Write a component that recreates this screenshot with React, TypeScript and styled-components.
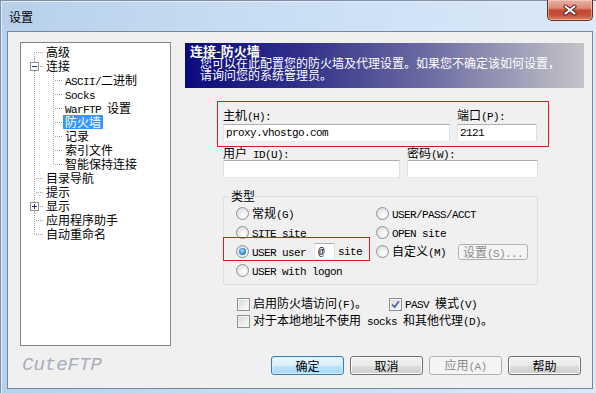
import React from "react";
import styled, { createGlobalStyle, css } from "styled-components";

const CJK = `"Noto Sans CJK SC", "Noto Sans", sans-serif`;
const MONO = `"Liberation Mono", "DejaVu Sans Mono", monospace`;

const GlobalStyle = createGlobalStyle`
  html, body { margin: 0; padding: 0; background: #ffffff; }
  body { font-family: ${CJK}; font-size: 12px; color: #000; }
  *, *::before, *::after { box-sizing: border-box; }
`;

/* latin run in the bitmap-like monospace of the dialog */
const M = styled.span`
  font-family: ${MONO};
  font-size: 11px;
  letter-spacing: -0.6px;
`;

const Window = styled.div`
  width: 596px;
  height: 393px;
  padding: 0 3px 4px 7px;
  display: flex;
  flex-direction: column;
  background: linear-gradient(to right, #b7d0eb 0%, #c9def3 45%, #dbe9f8 100%);
  box-shadow: inset 1px 1px 0 #7f90a5, inset 2px 2px 0 #e4eefa;
  overflow: hidden;
`;

const TitleBar = styled.div`
  height: 31px;
  flex: none;
  display: flex;
  align-items: flex-start;
`;

const TitleText = styled.div`
  margin: 10px 0 0 2px;
  font-size: 12px;
  line-height: 14px;
  color: #000;
`;

const CloseButton = styled.div`
  margin-left: auto;
  width: 46px;
  height: 21px;
  border: 1px solid #6b2b22;
  border-top: none;
  border-radius: 0 0 5px 5px;
  background: linear-gradient(
    to bottom,
    #eab1a2 0%,
    #dc8a78 40%,
    #c4492f 52%,
    #c24f36 75%,
    #dd8462 100%
  );
  box-shadow: inset 0 0 0 1px rgba(255, 220, 210, 0.5);
  display: flex;
  align-items: center;
  justify-content: center;
`;

const Client = styled.div`
  flex: 1;
  border: 1px solid #76879b;
  background: #f0f0f0;
  display: grid;
  grid-template-columns: 151px 1fr;
  grid-template-rows: 304px auto;
  column-gap: 14px;
  row-gap: 10px;
  align-content: start;
  padding: 10px 8px 0 12px;
`;

/* ---------- tree ---------- */
const TreePanel = styled.div`
  border: 1px solid #828790;
  background: #fff;
  padding: 2px 0 0 4px;
`;

const TreeRow = styled.div`
  display: flex;
  height: 14px;
`;

type VLine = "full" | "top" | "bottom";

const Guide = styled.span<{ $v: VLine; $h?: boolean }>`
  position: relative;
  width: 19px;
  flex: none;
  &::before {
    content: "";
    position: absolute;
    left: 9px;
    width: 1px;
    top: ${(p) => (p.$v === "bottom" ? "7px" : "0")};
    bottom: ${(p) => (p.$v === "top" ? "7px" : "0")};
    background: repeating-linear-gradient(
      to bottom,
      #a0a0a0 0 1px,
      transparent 1px 2px
    );
  }
  ${(p) =>
    p.$h &&
    css`
      &::after {
        content: "";
        position: absolute;
        left: 10px;
        top: 7px;
        width: 9px;
        height: 1px;
        background: repeating-linear-gradient(
          to right,
          transparent 0 1px,
          #a0a0a0 1px 2px
        );
      }
    `}
`;

const Expander = styled.span`
  position: absolute;
  z-index: 1;
  left: 5px;
  top: 3px;
  width: 9px;
  height: 9px;
  border: 1px solid #919191;
  background: #fff;
  display: flex;
  align-items: center;
  justify-content: center;
`;

const NodeLabel = styled.span<{ $sel?: boolean }>`
  display: inline-block;
  padding: 0 2px;
  height: 14px;
  line-height: 14px;
  white-space: nowrap;
  ${(p) =>
    p.$sel &&
    css`
      background: #3399ff;
      color: #fff;
    `}
`;

type TreeNode = {
  label: React.ReactNode;
  level: 0 | 1;
  exp?: "+" | "-";
  sel?: boolean;
};

const NODES: TreeNode[] = [
  { label: "高级", level: 0 },
  { label: "连接", level: 0, exp: "-" },
  { label: <><M>ASCII/</M>二进制</>, level: 1 },
  { label: <M>Socks</M>, level: 1 },
  { label: <><M>WarFTP </M>设置</>, level: 1 },
  { label: "防火墙", level: 1, sel: true },
  { label: "记录", level: 1 },
  { label: "索引文件", level: 1 },
  { label: "智能保持连接", level: 1 },
  { label: "目录导航", level: 0 },
  { label: "提示", level: 0 },
  { label: "显示", level: 0, exp: "+" },
  { label: "应用程序助手", level: 0 },
  { label: "自动重命名", level: 0 },
];

const ExpanderSign: React.FC<{ plus?: boolean }> = ({ plus }) => (
  <svg width="7" height="7" viewBox="0 0 7 7">
    <rect x="1" y="3" width="5" height="1" fill="#1e2f6a" />
    {plus && <rect x="3" y="1" width="1" height="5" fill="#1e2f6a" />}
  </svg>
);

const Tree: React.FC = () => (
  <TreePanel>
    {NODES.map((n, i) => {
      const last = i === NODES.length - 1;
      const v0: VLine = i === 0 ? "bottom" : last ? "top" : "full";
      const next = NODES[i + 1];
      const lastChild = n.level === 1 && (!next || next.level === 0);
      return (
        <TreeRow key={i}>
          <Guide $v={v0} $h={n.level === 0}>
            {n.exp && (
              <Expander>
                <ExpanderSign plus={n.exp === "+"} />
              </Expander>
            )}
          </Guide>
          {n.level === 1 && <Guide $v={lastChild ? "top" : "full"} $h />}
          <NodeLabel $sel={n.sel}>{n.label}</NodeLabel>
        </TreeRow>
      );
    })}
  </TreePanel>
);

/* ---------- right side ---------- */
const RightPanel = styled.div`
  display: flex;
  flex-direction: column;
  padding-top: 1px;
  min-width: 0;
`;

const Banner = styled.div`
  height: 45px;
  padding: 1px 0 0 5px;
  color: #fff;
  background: linear-gradient(
    to right,
    #0b0b7d 0%,
    #32328a 30%,
    #6a6aa2 60%,
    #c4c4c8 100%
  );
`;

const BannerTitle = styled.div`
  font-weight: 700;
  font-size: 13px;
  line-height: 13px;
`;

const BannerText = styled.div`
  padding-left: 10px;
  font-size: 12px;
  line-height: 12px;
  white-space: nowrap;
`;

const HighlightBox = styled.div`
  margin: 13px 0 0 32px;
  width: 332px;
  height: 46px;
  border: 1px solid #e8161e;
  padding: 6px 0 0 5px;
  display: flex;
  gap: 7px;
`;

const UserRow = styled.div`
  margin: -1px 0 0 38px;
  display: flex;
  gap: 7px;
`;

const Field = styled.div<{ $w: number; $gap: number }>`
  width: ${(p) => p.$w}px;
  display: flex;
  flex-direction: column;
  gap: ${(p) => p.$gap}px;
`;

const FieldLabel = styled.div`
  height: 14px;
  line-height: 14px;
  white-space: nowrap;
`;

const TextInput = styled.input<{ $w?: number; $ml?: number }>`
  width: ${(p) => (p.$w ? `${p.$w}px` : "100%")};
  height: 18px;
  margin: 0 0 0 ${(p) => p.$ml ?? 0}px;
  padding: 0 0 0 2px;
  border: 1px solid;
  border-color: #abadb3 #dbdfe6 #e3e9ef #e2e3ea;
  border-radius: 1px;
  background: #fff;
  color: #000;
  font-family: ${MONO};
  font-size: 11px;
  letter-spacing: -0.6px;
  outline: none;
`;

const SmallInput = styled(TextInput)`
  height: 17px;
  padding-left: 3px;
`;

const Group = styled.fieldset`
  margin: 11px 0 0 38px;
  width: 315px;
  border: 1px solid #d5dfe5;
  border-radius: 3px;
  padding: 1px 0 4px 12px;
  min-inline-size: 0;
`;

const GroupLegend = styled.legend`
  margin-left: -7px;
  padding: 0 2px;
  font-size: 12px;
  line-height: 14px;
`;

const RadioGrid = styled.div`
  display: grid;
  grid-template-columns: 140px auto;
  grid-auto-rows: 19px;
`;

const OptionItem = styled.div`
  position: relative;
  display: flex;
  align-items: center;
  gap: 3px;
  white-space: nowrap;
  line-height: 14px;
`;

const RadioDot = styled.span<{ $on?: boolean }>`
  width: 13px;
  height: 13px;
  flex: none;
  border-radius: 50%;
  border: 1px solid #8d9196;
  background: radial-gradient(circle at 60% 65%, #ffffff 0%, #f1f1f1 35%, #d3d3d3 100%);
  display: flex;
  align-items: center;
  justify-content: center;
  ${(p) =>
    p.$on &&
    css`
      &::after {
        content: "";
        width: 7px;
        height: 7px;
        border-radius: 50%;
        background: radial-gradient(
          circle at 45% 40%,
          #b6ecff 0%,
          #3d9be0 45%,
          #0b4a8c 100%
        );
      }
    `}
`;

const Annotation = styled.span`
  position: absolute;
  left: -13px;
  top: -5px;
  width: 147px;
  height: 24px;
  border: 1px solid #e8161e;
  pointer-events: none;
`;

const DialogButton = styled.button<{
  $kind?: "default" | "normal" | "disabled";
  $w?: number;
  $h?: number;
  $ml?: number;
}>`
  width: ${(p) => p.$w ?? 73}px;
  height: ${(p) => p.$h ?? 19}px;
  margin: 0 0 0 ${(p) => p.$ml ?? 0}px;
  padding: 0;
  border-radius: 3px;
  font-family: ${CJK};
  font-size: 12px;
  line-height: 14px;
  white-space: nowrap;
  color: #000;
  border: 1px solid #707070;
  background: linear-gradient(to bottom, #f2f2f2 0%, #ebebeb 50%, #dddddd 51%, #cfcfcf 100%);
  box-shadow: inset 0 0 0 1px #fbfbfb;
  ${(p) =>
    p.$kind === "default" &&
    css`
      border-color: #3c7fb1;
      background: linear-gradient(to bottom, #eaf6fd 0%, #d9f0fc 50%, #bee6fd 51%, #a7d9f5 100%);
      box-shadow: inset 0 0 0 1px #d0ecfa;
    `}
  ${(p) =>
    p.$kind === "disabled" &&
    css`
      border-color: #adb2b5;
      background: #f4f4f4;
      box-shadow: none;
      color: #8a8a8a;
    `}
`;

const CheckGrid = styled.div`
  margin: 10px 0 0 52px;
  display: grid;
  grid-template-columns: 152px auto;
  grid-auto-rows: 18px;
`;

const WideCell = styled.div`
  grid-column: 1 / -1;
`;

const CheckBox = styled.span`
  width: 13px;
  height: 13px;
  flex: none;
  border: 1px solid #8e8f8f;
  background: linear-gradient(135deg, #d6d6d6 0%, #ececec 55%, #fbfbfb 100%);
  box-shadow: inset 0 0 0 1px #f4f4f4;
  display: flex;
  align-items: center;
  justify-content: center;
`;

const Footer = styled.div`
  grid-column: 1 / -1;
  display: flex;
  align-items: center;
  height: 19px;
  padding-right: 3px;
`;

const Brand = styled.div`
  margin-left: 2px;
  font-family: ${MONO};
  font-style: italic;
  font-size: 19px;
  line-height: 19px;
  color: #a9adbb;
`;

const ButtonRow = styled.div`
  margin-left: auto;
  display: flex;
  gap: 6px;
`;

const Radio: React.FC<{ on?: boolean; children?: React.ReactNode }> = ({ on, children }) => (
  <>
    <RadioDot $on={on} />
    <span>{children}</span>
  </>
);

const Check: React.FC<{ on?: boolean; children: React.ReactNode }> = ({ on, children }) => (
  <OptionItem>
    <CheckBox>
      {on && (
        <svg width="9" height="9" viewBox="0 0 9 9">
          <path d="M1.2 4.6 L3.6 7.2 L7.9 1.2" fill="none" stroke="#4a62a8" strokeWidth="1.8" />
        </svg>
      )}
    </CheckBox>
    <span>{children}</span>
  </OptionItem>
);

export default function App() {
  return (
    <>
      <GlobalStyle />
      <Window>
        <TitleBar>
          <TitleText>设置</TitleText>
          <CloseButton>
            <svg width="16" height="12" viewBox="0 0 16 12">
              <path d="M3.5 2.5 L12.5 9.5 M12.5 2.5 L3.5 9.5" stroke="#4a1f17" strokeWidth="4" strokeLinecap="round" />
              <path d="M3.5 2.5 L12.5 9.5 M12.5 2.5 L3.5 9.5" stroke="#ffffff" strokeWidth="2.2" strokeLinecap="round" />
            </svg>
          </CloseButton>
        </TitleBar>
        <Client>
          <Tree />
          <RightPanel>
            <Banner>
              <BannerTitle>连接-防火墙</BannerTitle>
              <BannerText>您可以在此配置您的防火墙及代理设置。如果您不确定该如何设置，</BannerText>
              <BannerText>请询问您的系统管理员。</BannerText>
            </Banner>

            <HighlightBox>
              <Field $w={227} $gap={2}>
                <FieldLabel>主机<M>(H):</M></FieldLabel>
                <TextInput readOnly value="proxy.vhostgo.com" />
              </Field>
              <Field $w={80} $gap={2}>
                <FieldLabel>端口<M>(P):</M></FieldLabel>
                <TextInput readOnly value="2121" />
              </Field>
            </HighlightBox>

            <UserRow>
              <Field $w={177} $gap={0}>
                <FieldLabel>用户<M> ID(U):</M></FieldLabel>
                <TextInput readOnly value="" />
              </Field>
              <Field $w={131} $gap={0}>
                <FieldLabel>密码<M>(W):</M></FieldLabel>
                <TextInput readOnly value="" />
              </Field>
            </UserRow>

            <Group>
              <GroupLegend>类型</GroupLegend>
              <RadioGrid>
                <OptionItem>
                  <Radio>常规<M>(G)</M></Radio>
                </OptionItem>
                <OptionItem>
                  <Radio><M>USER/PASS/ACCT</M></Radio>
                </OptionItem>
                <OptionItem>
                  <Radio><M>SITE site</M></Radio>
                </OptionItem>
                <OptionItem>
                  <Radio><M>OPEN site</M></Radio>
                </OptionItem>
                <OptionItem>
                  <Radio on><M>USER user</M></Radio>
                  <SmallInput $w={21} $ml={5} readOnly value="@" />
                  <M>site</M>
                  <Annotation />
                </OptionItem>
                <OptionItem>
                  <Radio>自定义<M>(M)</M></Radio>
                  <DialogButton $kind="disabled" $w={70} $h={16} $ml={9} disabled>
                    设置<M>(S)...</M>
                  </DialogButton>
                </OptionItem>
                <OptionItem>
                  <Radio><M>USER with logon</M></Radio>
                </OptionItem>
              </RadioGrid>
            </Group>

            <CheckGrid>
              <Check>启用防火墙访问<M>(F)</M>。</Check>
              <Check on><M>PASV </M>模式<M>(V)</M></Check>
              <WideCell>
                <Check>对于本地地址不使用<M> socks </M>和其他代理<M>(D)</M>。</Check>
              </WideCell>
            </CheckGrid>
          </RightPanel>

          <Footer>
            <Brand>CuteFTP</Brand>
            <ButtonRow>
              <DialogButton $kind="default">确定</DialogButton>
              <DialogButton>取消</DialogButton>
              <DialogButton $kind="disabled" disabled>应用<M>(A)</M></DialogButton>
              <DialogButton>帮助</DialogButton>
            </ButtonRow>
          </Footer>
        </Client>
      </Window>
    </>
  );
}
